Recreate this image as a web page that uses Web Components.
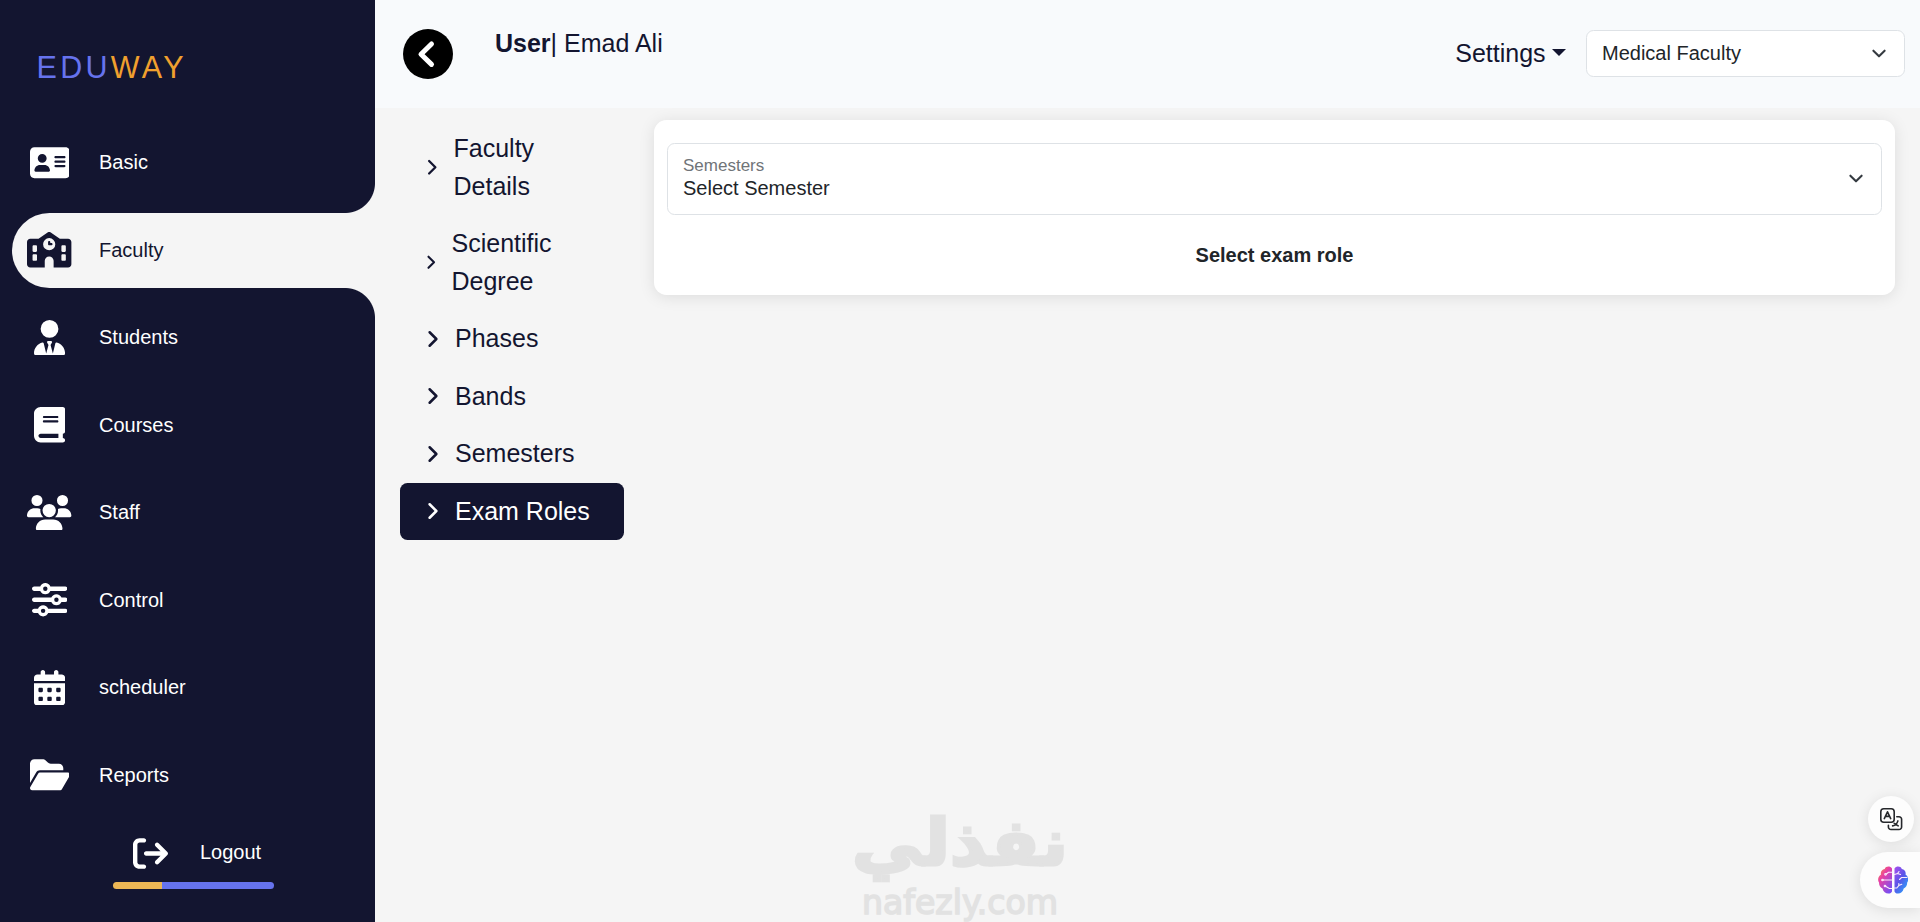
<!DOCTYPE html>
<html lang="en">
<head>
<meta charset="utf-8">
<title>Eduway</title>
<style>
    html, body { height: 100%; }
    body {
        margin: 0;
        overflow: hidden;
        background: #f5f5f5;
        color: #131530;
        font: 20px/1.5 "Liberation Sans", Arial, sans-serif;
        --navy: #131530;
        --page: #f5f5f5;
        --line: #dee2e6;
    }
</style>
</head>
<body>
<edu-app>
    <side-bar slot="side">
        <menu-item icon="card">Basic</menu-item>
        <menu-item icon="school" active>Faculty</menu-item>
        <menu-item icon="tie">Students</menu-item>
        <menu-item icon="book">Courses</menu-item>
        <menu-item icon="users">Staff</menu-item>
        <menu-item icon="sliders">Control</menu-item>
        <menu-item icon="calendar">scheduler</menu-item>
        <menu-item icon="folder">Reports</menu-item>
        <logout-button slot="foot">Logout</logout-button>
    </side-bar>
    <top-bar slot="top" user="Emad Ali">
        <select-box>Medical Faculty</select-box>
    </top-bar>
    <nav-list slot="nav">
        <nav-link icon-size="18.5">Faculty Details</nav-link>
        <nav-link icon-size="16.5">Scientific Degree</nav-link>
        <nav-link>Phases</nav-link>
        <nav-link>Bands</nav-link>
        <nav-link>Semesters</nav-link>
        <nav-link active>Exam Roles</nav-link>
    </nav-list>
    <exam-card>
        <select-box label="Semesters">Select Semester</select-box>
        <span slot="message">Select exam role</span>
    </exam-card>
</edu-app>
<water-mark></water-mark>
<float-tools></float-tools>

<script>
// width of the viewBox and path of each icon, all 512 high
const ICONS = {
    card: [576, 'M64 32C28.7 32 0 60.7 0 96V416c0 35.3 28.7 64 64 64H512c35.3 0 64-28.7 64-64V96c0-35.3-28.7-64-64-64H64zm80 256h64c44.2 0 80 35.8 80 80c0 8.8-7.2 16-16 16H80c-8.8 0-16-7.2-16-16c0-44.2 35.8-80 80-80zm-32-96a64 64 0 1 1 128 0 64 64 0 1 1 -128 0zm256-32H496c8.8 0 16 7.2 16 16s-7.2 16-16 16H368c-8.8 0-16-7.2-16-16s7.2-16 16-16zm0 64H496c8.8 0 16 7.2 16 16s-7.2 16-16 16H368c-8.8 0-16-7.2-16-16s7.2-16 16-16zm0 64H496c8.8 0 16 7.2 16 16s-7.2 16-16 16H368c-8.8 0-16-7.2-16-16s7.2-16 16-16z'],
    school: [640, 'M337.8 5.4C327-1.8 313-1.8 302.2 5.4L166.3 96H48C21.5 96 0 117.5 0 144V464c0 26.5 21.5 48 48 48H256V416c0-35.3 28.7-64 64-64s64 28.7 64 64v96H592c26.5 0 48-21.5 48-48V144c0-26.5-21.5-48-48-48H473.7L337.8 5.4zM96 192h32c8.8 0 16 7.2 16 16v64c0 8.8-7.2 16-16 16H96c-8.8 0-16-7.2-16-16V208c0-8.8 7.2-16 16-16zm400 16c0-8.8 7.2-16 16-16h32c8.8 0 16 7.2 16 16v64c0 8.8-7.2 16-16 16H512c-8.8 0-16-7.2-16-16V208zM96 320h32c8.8 0 16 7.2 16 16v64c0 8.8-7.2 16-16 16H96c-8.8 0-16-7.2-16-16V336c0-8.8 7.2-16 16-16zm400 16c0-8.8 7.2-16 16-16h32c8.8 0 16 7.2 16 16v64c0 8.8-7.2 16-16 16H512c-8.8 0-16-7.2-16-16V336zM232 176a88 88 0 1 1 176 0 88 88 0 1 1 -176 0zm88-48c-8.8 0-16 7.2-16 16v32c0 8.8 7.2 16 16 16h32c8.8 0 16-7.2 16-16s-7.2-16-16-16H336V144c0-8.8-7.2-16-16-16z'],
    tie: [448, 'M96 128a128 128 0 1 0 256 0A128 128 0 1 0 96 128zm94.5 200.2l18.6 31L175.8 483.1l-36-146.9c-2-8.1-9.8-13.4-17.9-11.3C51.9 342.4 0 405.8 0 481.3c0 17 13.8 30.7 30.7 30.7H162.5h.1H417.3c17 0 30.7-13.8 30.7-30.7c0-75.5-51.9-138.9-121.9-156.4c-8.1-2-15.9 3.3-17.9 11.3l-36 146.9L238.9 359.2l18.6-31c6.4-10.7-1.3-24.2-13.7-24.2H224 204.3c-12.4 0-20.1 13.6-13.7 24.2z'],
    book: [448, 'M96 0C43 0 0 43 0 96V416c0 53 43 96 96 96H384h32c17.7 0 32-14.3 32-32s-14.3-32-32-32V384c17.7 0 32-14.3 32-32V32c0-17.7-14.3-32-32-32H384 96zm0 384H352v64H96c-17.7 0-32-14.3-32-32s14.3-32 32-32zm32-240c0-8.8 7.2-16 16-16H336c8.8 0 16 7.2 16 16s-7.2 16-16 16H144c-8.8 0-16-7.2-16-16zm16 48H336c8.8 0 16 7.2 16 16s-7.2 16-16 16H144c-8.8 0-16-7.2-16-16s7.2-16 16-16z'],
    users: [640, 'M144 0a80 80 0 1 1 0 160A80 80 0 1 1 144 0zM512 0a80 80 0 1 1 0 160A80 80 0 1 1 512 0zM0 298.7C0 239.8 47.8 192 106.7 192h42.7c15.9 0 31 3.5 44.6 9.7c-1.3 7.2-1.9 14.7-1.9 22.3c0 38.2 16.8 72.5 43.3 96c-.2 0-.4 0-.7 0H21.3C9.6 320 0 310.4 0 298.7zM405.3 320c-.2 0-.4 0-.7 0c26.6-23.5 43.3-57.8 43.3-96c0-7.6-.7-15-1.9-22.3c13.6-6.3 28.7-9.7 44.6-9.7h42.7C592.2 192 640 239.8 640 298.7c0 11.8-9.6 21.3-21.3 21.3H405.3zM224 224a96 96 0 1 1 192 0 96 96 0 1 1 -192 0zM128 485.3C128 411.7 187.7 352 261.3 352H378.7C452.3 352 512 411.7 512 485.3c0 14.7-11.9 26.7-26.7 26.7H154.7c-14.7 0-26.7-11.9-26.7-26.7z'],
    sliders: [512, 'M0 416c0 17.7 14.3 32 32 32l54.7 0c12.3 28.3 40.5 48 73.3 48s61-19.7 73.3-48L480 448c17.7 0 32-14.3 32-32s-14.3-32-32-32l-246.7 0c-12.3-28.3-40.5-48-73.3-48s-61 19.7-73.3 48L32 384c-17.7 0-32 14.3-32 32zm128 0a32 32 0 1 1 64 0 32 32 0 1 1 -64 0zM320 256a32 32 0 1 1 64 0 32 32 0 1 1 -64 0zm32-80c-32.8 0-61 19.7-73.3 48L32 224c-17.7 0-32 14.3-32 32s14.3 32 32 32l246.7 0c12.3 28.3 40.5 48 73.3 48s61-19.7 73.3-48l54.7 0c17.7 0 32-14.3 32-32s-14.3-32-32-32l-54.7 0c-12.3-28.3-40.5-48-73.3-48zM192 128a32 32 0 1 1 0-64 32 32 0 1 1 0 64zm73.3-64C253 35.7 224.8 16 192 16s-61 19.7-73.3 48L32 64C14.3 64 0 78.3 0 96s14.3 32 32 32l86.7 0c12.3 28.3 40.5 48 73.3 48s61-19.7 73.3-48L480 128c17.7 0 32-14.3 32-32s-14.3-32-32-32L265.3 64z'],
    calendar: [448, 'M128 0c17.7 0 32 14.3 32 32V64H288V32c0-17.7 14.3-32 32-32s32 14.3 32 32V64h48c26.5 0 48 21.5 48 48v48H0V112C0 85.5 21.5 64 48 64H96V32c0-17.7 14.3-32 32-32zM0 192H448V464c0 26.5-21.5 48-48 48H48c-26.5 0-48-21.5-48-48V192z'
        + [[64, 272], [192, 272], [320, 272], [64, 400], [192, 400], [320, 400]].map(([x, y]) =>
            `M${x} ${y}v32c0 8.8 7.2 16 16 16h32c8.8 0 16-7.2 16-16v-32c0-8.8-7.2-16-16-16h-32c-8.8 0-16 7.2-16 16z`).join('')],
    folder: [576, 'M88.7 223.8L0 375.8V96C0 60.7 28.7 32 64 32H181.5c17 0 33.3 6.7 45.3 18.7l26.5 26.5c12 12 28.3 18.7 45.3 18.7H416c35.3 0 64 28.7 64 64v32H144c-22.8 0-43.8 12.1-55.3 31.8zm27.6 16.1C122.1 230 132.6 224 144 224H544c11.5 0 22 6.1 27.7 16.1s5.7 22.2-.1 32.1l-112 192C453.9 474 443.4 480 432 480H32c-11.5 0-22-6.1-27.7-16.1s-5.7-22.2 .1-32.1l112-192z'],
    logout: [512, 'M502.6 278.6c12.5-12.5 12.5-32.8 0-45.3l-128-128c-12.5-12.5-32.8-12.5-45.3 0s-12.5 32.8 0 45.3L402.7 224 192 224c-17.7 0-32 14.3-32 32s14.3 32 32 32l210.7 0-73.4 73.4c-12.5 12.5-12.5 32.8 0 45.3s32.8 12.5 45.3 0l128-128zM160 96c17.7 0 32-14.3 32-32s-14.3-32-32-32L96 32C43 32 0 75 0 128L0 384c0 53 43 96 96 96l64 0c17.7 0 32-14.3 32-32s-14.3-32-32-32l-64 0c-17.7 0-32-14.3-32-32l0-256c0-17.7 14.3-32 32-32l64 0z']
};

function icon(name, size = 35) {
    const [w, d] = ICONS[name];
    return `<svg viewBox="0 0 ${w} 512" width="${w / 512 * size}" height="${size}" fill="currentColor"><path d="${d}"/></svg>`;
}

class BaseElement extends HTMLElement {
    constructor() {
        super();
        this.attachShadow({ mode: 'open' });
    }

    connectedCallback() {
        this.shadowRoot.innerHTML = this.template();
    }
}

class EduApp extends BaseElement {
    template() {
        return `
            <style>
                :host { display: flex; height: 922px; }
                .main { flex: 1; display: flex; flex-direction: column; min-width: 0; }
                .body { flex: 1; display: flex; align-items: flex-start; padding: 12px 25px 0; gap: 30px; }
            </style>
            <slot name="side"></slot>
            <div class="main">
                <slot name="top"></slot>
                <div class="body">
                    <slot name="nav"></slot>
                    <slot></slot>
                </div>
            </div>`;
    }
}

class SideBar extends BaseElement {
    template() {
        return `
            <style>
                :host { display: flex; flex-direction: column; flex: none; box-sizing: border-box; width: 375px; background: var(--navy); color: #fff; padding-top: 45px; }
                .logo { padding-left: 36.5px; height: 45px; font-size: 30.5px; line-height: 45px; letter-spacing: 3.3px; color: #6673ee; }
                .logo span { color: #f0a02e; }
                nav { display: flex; flex-direction: column; gap: 12.5px; padding: 35.5px 0 0 12px; }
            </style>
            <div class="logo">EDU<span>WAY</span></div>
            <nav><slot></slot></nav>
            <slot name="foot"></slot>`;
    }
}

class MenuItem extends BaseElement {
    template() {
        return `
            <style>
                :host { display: flex; align-items: center; position: relative; height: 75px; }
                .icon { display: flex; justify-content: center; width: 75px; padding-bottom: 1px; }
                .text { padding: 0 0 2px 12px; }
                :host([active]) { background: var(--page); color: var(--navy); border-radius: 37.5px 0 0 37.5px; }
                /* inverted corners above and below the active tab */
                :host([active])::before, :host([active])::after {
                    content: ""; position: absolute; right: 0; width: 30px; height: 30px;
                }
                :host([active])::before { top: -30px; background: radial-gradient(circle at 0 0, transparent 29.5px, var(--page) 30.5px); }
                :host([active])::after { bottom: -30px; background: radial-gradient(circle at 0 100%, transparent 29.5px, var(--page) 30.5px); }
            </style>
            <span class="icon">${icon(this.getAttribute('icon'), 35.5)}</span>
            <span class="text"><slot></slot></span>`;
    }
}

class LogoutButton extends BaseElement {
    template() {
        return `
            <style>
                :host { display: block; width: 161px; margin-left: 113px; }
                .row { display: flex; align-items: center; gap: 32.5px; padding-left: 19.5px; height: 57px; margin-top: 12px; }
                .row svg { padding-bottom: 1px; }
                .row span { padding-bottom: 3px; }
                .bar { height: 7px; border-radius: 4px; background: linear-gradient(90deg, #ecb655 30.3%, #6673ee 30.3%); }
            </style>
            <div class="row">${icon('logout')}<span><slot></slot></span></div>
            <div class="bar"></div>`;
    }
}

class TopBar extends BaseElement {
    template() {
        return `
            <style>
                :host { display: flex; align-items: center; position: relative; z-index: 1; flex: none; box-sizing: border-box; height: 108px; padding: 0 15px 0 27.5px; background: #f8fafc; font-size: 25px; }
                .back { width: 50px; height: 50px; border-radius: 50%; background: #000; }
                .user { align-self: flex-start; padding: 24.5px 0 0 42.5px; flex: 1; }
                .settings { display: flex; align-items: center; gap: 6.4px; margin-right: 20px; }
                .settings::after { content: ""; border: 7px solid transparent; border-top-color: currentColor; border-bottom: 0; margin-bottom: 3px; }
                ::slotted(select-box) { width: 319px; height: 47px; font-size: 20px; margin-bottom: 1px; }
            </style>
            <svg class="back" viewBox="0 0 50 50" fill="none" stroke="#fff" stroke-width="5" stroke-linecap="round" stroke-linejoin="round"><path d="M28.500 15 18 25.200l10.500 10.200"/></svg>
            <div class="user"><b>User</b>| ${this.getAttribute('user')}</div>
            <div class="settings">Settings</div>
            <slot></slot>`;
    }
}

class SelectBox extends BaseElement {
    template() {
        const label = this.getAttribute('label');
        return `
            <style>
                :host { display: flex; align-items: center; justify-content: space-between; box-sizing: border-box; background: #fff; border: 1px solid var(--line); border-radius: 7.5px; padding: 0 15px; color: #212529; }
                .text { display: flex; flex-direction: column; line-height: 23px; }
                :host([label]) .text { padding-bottom: 4px; }
                :host([label]) svg { margin-bottom: 1px; }
                small { font-size: 17px; line-height: 23px; color: #707478; }
            </style>
            <span class="text">${label ? `<small>${label}</small>` : ''}<slot></slot></span>
            <svg viewBox="0 0 16 16" width="20" height="15" fill="none" stroke="#343a40" stroke-width="2.200" stroke-linecap="round" stroke-linejoin="round"><path d="m2 5 6 6 6-6"/></svg>`;
    }
}

class NavList extends BaseElement {
    template() {
        return `
            <style>:host { display: flex; flex-direction: column; flex: none; width: 224px; }</style>
            <slot></slot>`;
    }
}

class NavLink extends BaseElement {
    template() {
        const size = this.getAttribute('icon-size') || 20;
        return `
            <style>
                :host { display: flex; align-items: center; gap: 12.500px; padding: 10px 22px 10px 22.500px; font-size: 25px; line-height: 37.500px; border-radius: 7.500px; }
                :host([active]) { background: var(--navy); color: #fff; }
                svg { flex: none; }
                span { max-width: 145px; }
            </style>
            <svg viewBox="0 0 16 16" width="${size}" height="${size}" fill="none" stroke="currentColor" stroke-width="2" stroke-linecap="round" stroke-linejoin="round"><path d="m5.300 2.600 5.400 5.400-5.400 5.400"/></svg>
            <span><slot></slot></span>`;
    }
}

class ExamCard extends BaseElement {
    template() {
        return `
            <style>
                :host { display: block; flex: 1; box-sizing: border-box; height: 175px; padding: 23px 13px 0; background: #fff; border-radius: 12.5px; box-shadow: 0 2px 16px rgba(0, 0, 0, .1); }
                ::slotted(select-box) { height: 72px; }
                .message { margin-top: 25px; text-align: center; font-weight: bold; color: #212529; }
            </style>
            <slot></slot>
            <div class="message"><slot name="message"></slot></div>`;
    }
}

class WaterMark extends BaseElement {
    template() {
        return `
            <style>
                :host { position: absolute; left: 850px; top: 800px; width: 220px; height: 122px; pointer-events: none; }
                svg { display: block; }
            </style>
            <svg width="220" height="122" fill="#e2e2e2" stroke="#e2e2e2">
                <text x="110" y="65" font-family="DejaVu Sans, sans-serif" font-weight="bold" font-size="64" text-anchor="middle" direction="rtl" textLength="216" lengthAdjust="spacingAndGlyphs" stroke-width="3">نفذلي</text>
                <text x="12" y="114" font-family="DejaVu Sans, sans-serif" font-size="34" textLength="196" lengthAdjust="spacingAndGlyphs" stroke-width="1.6">nafezly.com</text>
            </svg>`;
    }
}

class FloatTools extends BaseElement {
    template() {
        return `
            <style>
                :host { position: absolute; right: 0; top: 796px; display: flex; flex-direction: column; align-items: flex-end; gap: 10px; z-index: 2; }
                .round, .pill { display: flex; align-items: center; box-sizing: border-box; background: #fdfdfd; box-shadow: 0 2px 14px rgba(0, 0, 0, .1); }
                .round { width: 46px; height: 46px; border-radius: 50%; justify-content: center; margin-right: 6px; }
                .pill { width: 60px; height: 56px; border-radius: 28px 0 0 28px; padding-left: 18px; }
            </style>
            <div class="round">
                <svg width="24" height="24" viewBox="0 0 24 24" fill="none" stroke="#26282c" stroke-width="1.6" stroke-linecap="round" stroke-linejoin="round">
                    <rect x="1.8" y="1.8" width="13.4" height="13.4" rx="3"/>
                    <path d="m5.3 11.6 3.2-6.8 3.2 6.800M6.500 9.400h4M17.800 9.700h2.200a2.600 2.600 0 0 1 2.600 2.600v7.600a2.600 2.600 0 0 1-2.600 2.600h-8a2.600 2.600 0 0 1-2.600-2.600v-1.600"/>
                    <path d="M13.600 18.900c3-.5 4.500-2.200 5.300-5M15.200 16.300l4 2.600"/>
                </svg>
            </div>
            <div class="pill">
                <svg width="30" height="28" viewBox="0 0 30 28">
                    <defs>
                        <linearGradient id="left" x1="0" y1="0" x2=".7" y2="1">
                            <stop offset="0" stop-color="#fb9a35"/><stop offset=".4" stop-color="#e83fa4"/><stop offset="1" stop-color="#7b4ff0"/>
                        </linearGradient>
                        <linearGradient id="right" x1="0" y1="0" x2=".8" y2="1">
                            <stop offset="0" stop-color="#a94fee"/><stop offset=".5" stop-color="#5a54e8"/><stop offset="1" stop-color="#27a5fb"/>
                        </linearGradient>
                    </defs>
                    <path fill="url(#left)" d="M14 2.500C12-.4 7.800.1 6.700 2.900 3.900 3.300 2.200 6 3 8.600.2 10.200-.7 14 1 16.600c0 3 1.200 5 3.500 6 .8 3.400 3.500 5.200 6.200 5 1.600-.1 2.800-1 3.300-2.200z"/>
                    <path fill="url(#right)" d="M16.500 2.500c2-2.900 6.200-2.400 7.300.4 2.800.4 4.500 3.100 3.700 5.700 2.800 1.600 3.400 5.400 1.700 8 0 3-1.200 5-3.500 6-.8 3.400-3.300 5.200-6 5-1.600-.1-2.700-1-3.200-2.200z"/>
                    <g fill="none" stroke="#fbeafa" stroke-width="1.100" stroke-linecap="round">
                        <path d="M14 6.300h-3.500L8.300 8M14 14H4.500M14 22.500h-2.700L7.500 20.300M16.500 8.500l3-1 1.500-2M19.500 7.500l3 1M29 11.500h-5.500l-2 2M16.500 22h2.300l2-2.500v-2M20.800 19.500l3-1.200"/>
                        <circle cx="7.500" cy="8.300" r=".8"/><circle cx="4.500" cy="14" r=".8"/><circle cx="7" cy="20" r=".8"/>
                    </g>
                </svg>
            </div>`;
    }
}

customElements.define('edu-app', EduApp);
customElements.define('side-bar', SideBar);
customElements.define('menu-item', MenuItem);
customElements.define('logout-button', LogoutButton);
customElements.define('top-bar', TopBar);
customElements.define('select-box', SelectBox);
customElements.define('nav-list', NavList);
customElements.define('nav-link', NavLink);
customElements.define('exam-card', ExamCard);
customElements.define('water-mark', WaterMark);
customElements.define('float-tools', FloatTools);
</script>
</body>
</html>
